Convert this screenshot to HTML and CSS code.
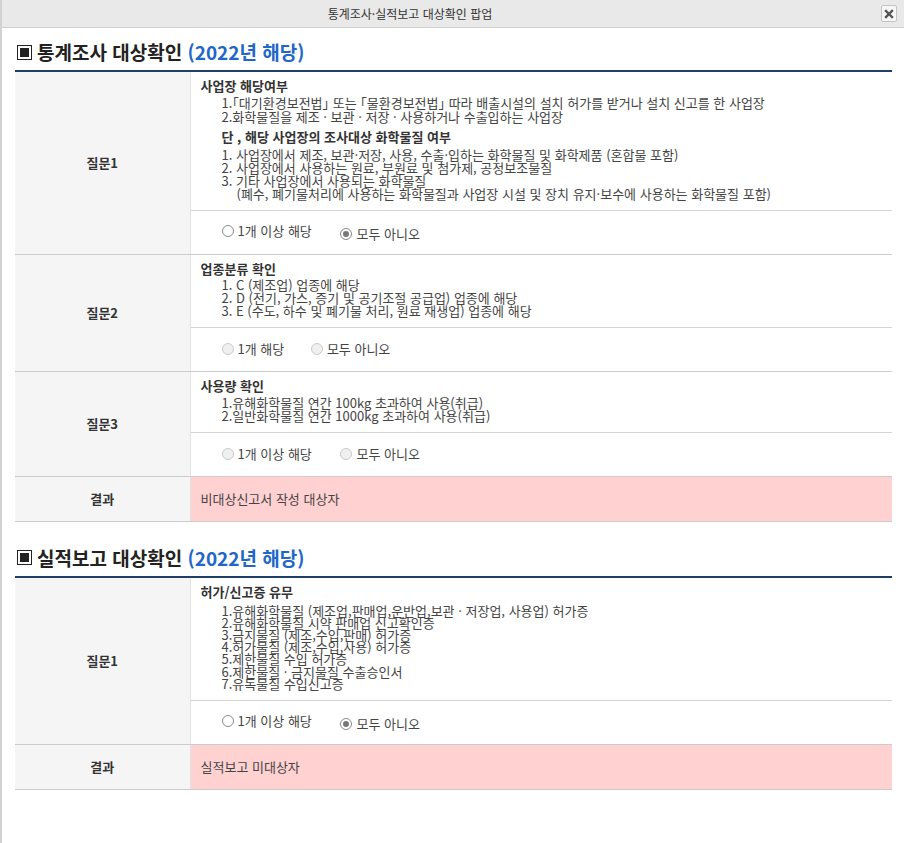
FILE: index.html
```html
<!DOCTYPE html>
<html lang="ko">
<head>
<meta charset="utf-8">
<title>통계조사·실적보고 대상확인 팝업</title>
<link rel="stylesheet" href="styles.css">
</head>
<body>
<div class="popup">
  <div class="titlebar">
    <span class="title">통계조사·실적보고 대상확인 팝업</span>
    <button class="close" type="button" aria-label="닫기">
      <svg width="10" height="10" viewBox="0 0 10 10"><path d="M2 2 L8 8 M8 2 L2 8" stroke="#555" stroke-width="2.4" stroke-linecap="square"/></svg>
    </button>
  </div>
  <div class="content">
    <h2 class="sec-title"><span class="sq"></span>통계조사 대상확인&nbsp;<span class="year">(2022년 해당)</span></h2>
    <table class="qtable">
      <tr>
        <th rowspan="2">질문1</th>
        <td class="desc">
          <div class="q-head">사업장 해당여부</div>
          <ul class="lines l14">
            <li class="halt">1.「대기환경보전법」 또는 「물환경보전법」 따라 배출시설의 설치 허가를 받거나 설치 신고를 한 사업장</li>
            <li>2.화학물질을 제조 · 보관 · 저장 · 사용하거나 수출입하는 사업장</li>
          </ul>
          <div class="sub-head">단 , 해당 사업장의 조사대상 화학물질 여부</div>
          <ul class="lines l13 gap35">
            <li>1. 사업장에서 제조, 보관·저장, 사용, 수출·입하는 화학물질 및 화학제품 (혼합물 포함)</li>
            <li>2. 사업장에서 사용하는 원료, 부원료 및 첨가제, 공정보조물질</li>
            <li>3. 기타 사업장에서 사용되는 화학물질</li>
            <li class="cont">(폐수, 폐기물처리에 사용하는 화학물질과 사업장 시설 및 장치 유지·보수에 사용하는 화학물질 포함)</li>
          </ul>
        </td>
      </tr>
      <tr>
        <td class="opts">
          <label class="opt"><input class="rd" type="radio" name="s1q1">1개 이상 해당</label>
          <label class="opt"><input class="rd" type="radio" name="s1q1" checked>모두 아니오</label>
        </td>
      </tr>
      <tr>
        <th rowspan="2">질문2</th>
        <td class="desc">
          <div class="q-head">업종분류 확인</div>
          <ul class="lines l13 gap15">
            <li>1. C (제조업) 업종에 해당</li>
            <li>2. D (전기, 가스, 증기 및 공기조절 공급업) 업종에 해당</li>
            <li>3. E (수도, 하수 및 폐기물 처리, 원료 재생업) 업종에 해당</li>
          </ul>
        </td>
      </tr>
      <tr>
        <td class="opts">
          <label class="opt tight"><input class="rd" type="radio" name="s1q2" disabled>1개 해당</label>
          <label class="opt"><input class="rd" type="radio" name="s1q2" disabled>모두 아니오</label>
        </td>
      </tr>
      <tr>
        <th rowspan="2">질문3</th>
        <td class="desc">
          <div class="q-head">사용량 확인</div>
          <ul class="lines l13 gap15">
            <li>1.유해화학물질 연간 100kg 초과하여 사용(취급)</li>
            <li>2.일반화학물질 연간 1000kg 초과하여 사용(취급)</li>
          </ul>
        </td>
      </tr>
      <tr>
        <td class="opts">
          <label class="opt"><input class="rd" type="radio" name="s1q3" disabled>1개 이상 해당</label>
          <label class="opt"><input class="rd" type="radio" name="s1q3" disabled>모두 아니오</label>
        </td>
      </tr>
      <tr>
        <th>결과</th>
        <td class="result">비대상신고서 작성 대상자</td>
      </tr>
    </table>

    <h2 class="sec-title second"><span class="sq"></span>실적보고 대상확인&nbsp;<span class="year">(2022년 해당)</span></h2>
    <table class="qtable">
      <tr>
        <th rowspan="2">질문1</th>
        <td class="desc">
          <div class="q-head">허가/신고증 유무</div>
          <ul class="lines l12 gap5">
            <li>1.유해화학물질 (제조업,판매업,운반업,보관 · 저장업, 사용업) 허가증</li>
            <li>2.유해화학물질 시약 판매업 신고확인증</li>
            <li>3.금지물질 (제조,수입,판매) 허가증</li>
            <li>4.허가물질 (제조,수입,사용) 허가증</li>
            <li>5.제한물질 수입 허가증</li>
            <li>6.제한물질 · 금지물질 수출승인서</li>
            <li>7.유독물질 수입신고증</li>
          </ul>
        </td>
      </tr>
      <tr>
        <td class="opts">
          <label class="opt"><input class="rd" type="radio" name="s2q1">1개 이상 해당</label>
          <label class="opt"><input class="rd" type="radio" name="s2q1" checked>모두 아니오</label>
        </td>
      </tr>
      <tr>
        <th>결과</th>
        <td class="result">실적보고 미대상자</td>
      </tr>
    </table>
  </div>
</div>
</body>
</html>
```

FILE: styles.css
```css
html, body {
  margin: 0;
  padding: 0;
  background: #fff;
}
body {
  font-family: "Noto Sans CJK KR", "Noto Sans", sans-serif;
  font-size: 13px;
  color: #333;
}
.popup {
  border-left: 2px solid #d2d2d2;
  min-height: 843px;
  box-sizing: border-box;
}
.titlebar {
  height: 28px;
  box-sizing: border-box;
  background: #e9e9e9;
  border-bottom: 1px solid #d0d0d0;
  display: flex;
  align-items: center;
}
.title {
  flex: 1;
  text-align: center;
  font-size: 12px;
  line-height: 27px;
  color: #333;
  padding-right: 63px;
}
.close {
  width: 16px;
  height: 17px;
  margin: 0 7px 0 0;
  padding: 0;
  border: 1px solid #c4c4c4;
  border-radius: 2px;
  background: #f7f7f7;
  display: flex;
  align-items: center;
  justify-content: center;
}
.content {
  padding: 0 12px 0 13px;
}
.sec-title {
  margin: 12px 0 6px;
  font-size: 19px;
  line-height: 24px;
  font-weight: bold;
  color: #222;
  display: flex;
  align-items: center;
}
.sec-title.second {
  margin-top: 24px;
}
.sq {
  width: 15px;
  height: 15px;
  box-sizing: border-box;
  border: 1.5px solid #222;
  padding: 2px;
  margin: 0 5px 0 2px;
  background: #222;
  background-clip: content-box;
  flex: none;
}
.year {
  color: #2166c9;
}
.qtable {
  width: 100%;
  border-collapse: collapse;
  border-top: 2px solid #1f3f66;
}
.qtable th {
  width: 175px;
  box-sizing: border-box;
  background: #f5f5f5;
  border-right: 1px solid #e2e2e2;
  border-bottom: 1px solid #cccccc;
  font-weight: bold;
  font-size: 13px;
  color: #333;
  text-align: center;
  vertical-align: middle;
  padding: 0;
}
.desc {
  padding: 6px 10px 10px 10px;
  border-bottom: 1px solid #d4d4d4;
  vertical-align: top;
  color: #444;
}
.q-head {
  font-weight: bold;
  line-height: 16px;
  color: #333;
}
.sub-head {
  font-weight: bold;
  line-height: 14px;
  margin-top: 6px;
  padding-left: 21px;
  color: #333;
}
.lines {
  list-style: none;
  margin: 0;
  padding: 0 0 0 21px;
}
.halt {
  font-feature-settings: "halt" 1;
}
.l14 {
  line-height: 14px;
  margin-top: 2px;
}
.l13 {
  line-height: 13px;
}
.l12 {
  line-height: 12.2px;
}
.gap35 { margin-top: 3.5px; }
.gap15 { margin-top: 1.5px; }
.gap5 { margin-top: 5px; }
.cont {
  padding-left: 15px;
}
.opts {
  height: 43px;
  padding: 0 0 0 31px;
  border-bottom: 1px solid #cccccc;
  vertical-align: middle;
  color: #444;
}
.opt {
  display: inline-flex;
  align-items: center;
  margin-right: 25px;
  line-height: 16px;
}
.opt.tight {
  margin-right: 23px;
}
.rd {
  appearance: none;
  -webkit-appearance: none;
  width: 12px;
  height: 12px;
  box-sizing: border-box;
  border: 1px solid #8a8a8a;
  border-radius: 50%;
  background: #fff;
  margin: 0 4px 0 0;
  display: inline-grid;
  place-content: center;
}
.rd:checked::before {
  content: "";
  width: 6px;
  height: 6px;
  border-radius: 50%;
  background: #787878;
}
.rd:disabled {
  border-color: #cacaca;
  background: #f0f0f0;
}
.result {
  height: 44px;
  padding: 0 10px;
  background: #ffd1d1;
  border-bottom: 1px solid #cccccc;
  color: #444;
  vertical-align: middle;
}
```
